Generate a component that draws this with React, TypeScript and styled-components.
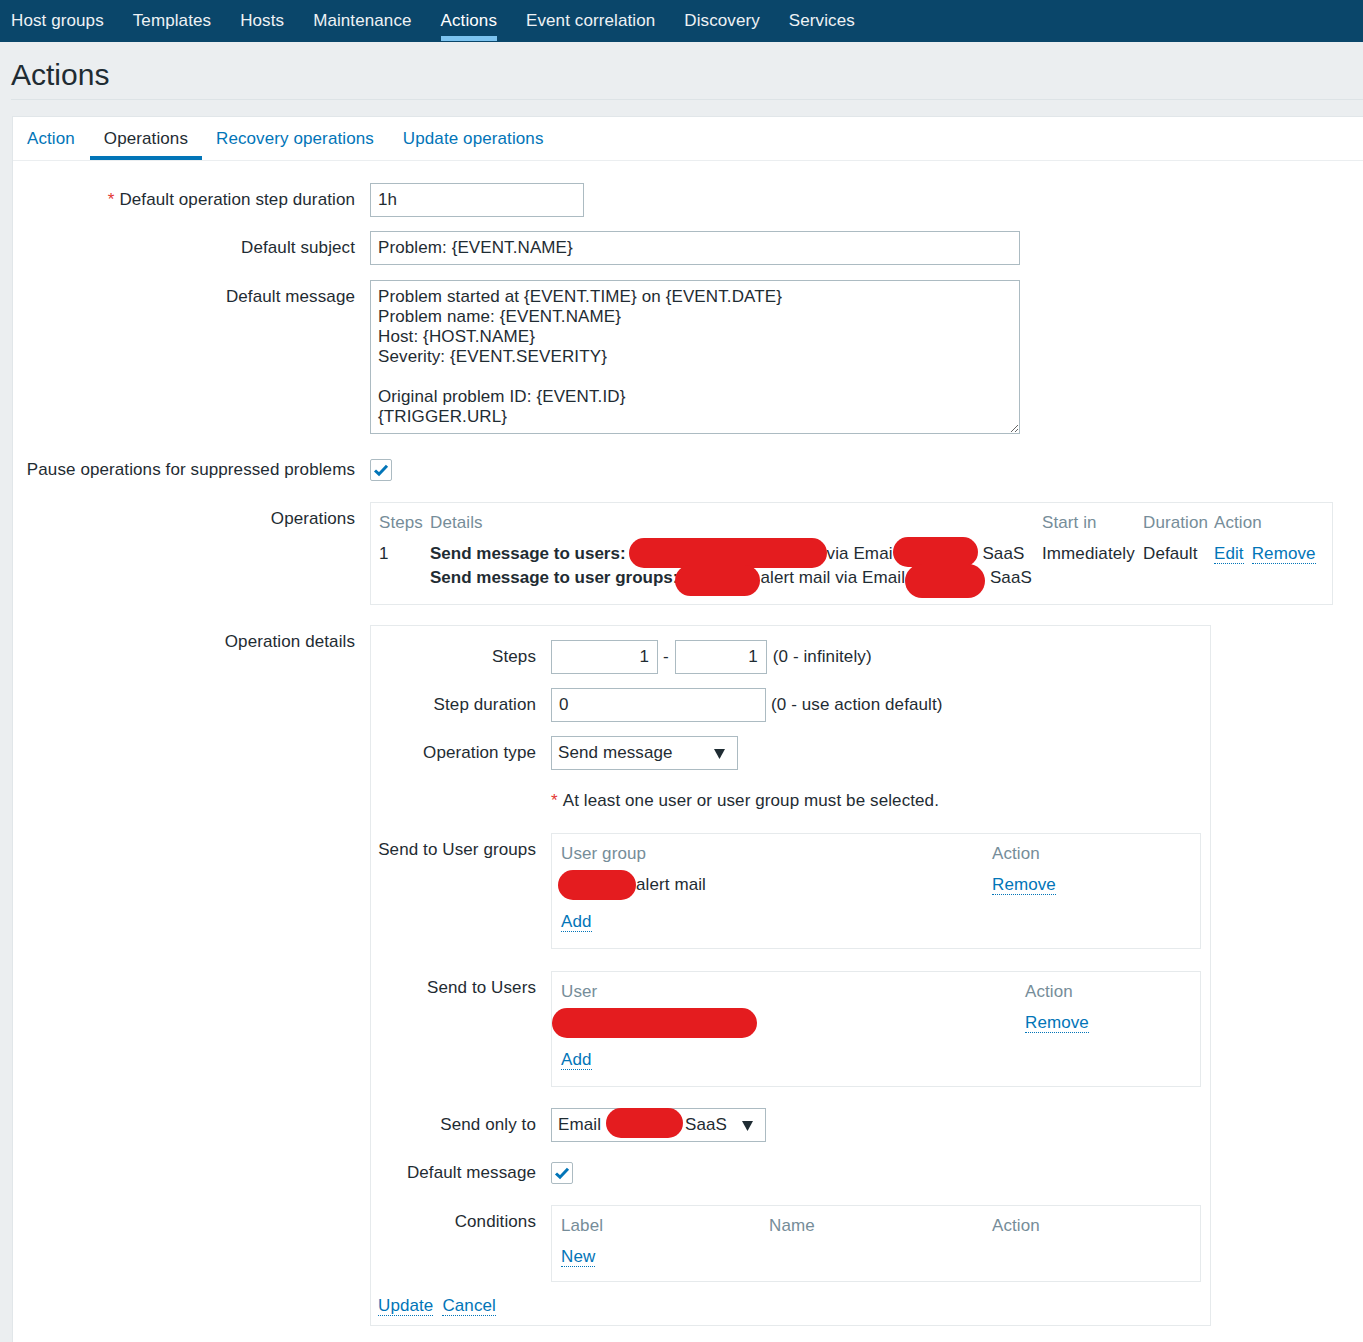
import React from 'react';
import styled, { createGlobalStyle } from 'styled-components';

const Global = createGlobalStyle`
  html, body { margin: 0; padding: 0; background: #ebeef0; }
  body {
    font-family: "Liberation Sans", Arial, sans-serif;
    font-size: 17px;
    letter-spacing: 0.1px;
    color: #1f2c33;
  }
  * { box-sizing: border-box; }
`;

const LINK = '#0275b8';
const MUTED = '#768d99';
const INPUT_BORDER = '#acbbc2';
const BOX_BORDER = '#e6eaec';

const TopNav = styled.nav`
  display: flex;
  height: 42px;
  background: #0a466a;
  padding-left: 11px;
  gap: 29px;
`;

const NavItem = styled.a<{ $active?: boolean }>`
  position: relative;
  display: flex;
  align-items: center;
  padding-bottom: 1px;
  color: ${(p) => (p.$active ? '#ffffff' : '#eef2f5')};
  text-decoration: none;
  white-space: nowrap;
  &::after {
    content: '';
    display: ${(p) => (p.$active ? 'block' : 'none')};
    position: absolute;
    left: 0;
    right: 0;
    bottom: 1px;
    height: 5px;
    background: #7cc3ef;
  }
`;

const Page = styled.div`
  padding-left: 11px;
`;

const Header = styled.h1`
  margin: 0;
  height: 58px;
  display: flex;
  align-items: center;
  font-size: 30px;
  font-weight: normal;
  letter-spacing: 0;
  border-bottom: 1px solid #dde3e6;
  padding-top: 8px;
`;

const Panel = styled.div`
  margin: 16px 0 0 1px;
  background: #fff;
  border: 1px solid #e1e6e9;
  border-right: none;
  border-bottom: none;
  min-height: 1226px;
`;

const TabBar = styled.div`
  display: flex;
  height: 44px;
  border-bottom: 1px solid #ebeef0;
`;

const Tab = styled.a<{ $active?: boolean }>`
  position: relative;
  display: flex;
  align-items: center;
  padding: 0 14px 0;
  margin-right: ${(p) => (p.$active ? '0' : '1px')};
  color: ${(p) => (p.$active ? '#1f2c33' : LINK)};
  white-space: nowrap;
  &::after {
    content: '';
    display: ${(p) => (p.$active ? 'block' : 'none')};
    position: absolute;
    left: 0;
    right: 0;
    bottom: 0;
    height: 4px;
    background: ${LINK};
  }
`;

const Form = styled.div`
  padding: 22px 0 0 0;
`;

const Row = styled.div<{ $top?: number; $labelW?: number }>`
  display: grid;
  grid-template-columns: ${(p) => p.$labelW ?? 342}px 1fr;
  column-gap: 15px;
  margin-top: ${(p) => p.$top ?? 0}px;
  align-items: start;
`;

const Label = styled.div`
  text-align: right;
  line-height: 34px;
  white-space: nowrap;
`;

const Req = styled.span`
  color: #e33734;
  margin-right: 5px;
`;

const FieldLine = styled.div`
  display: flex;
  align-items: center;
  min-height: 34px;
  white-space: nowrap;
`;

const TextInput = styled.input<{ $w: number; $right?: boolean }>`
  width: ${(p) => p.$w}px;
  height: 34px;
  border: 1px solid ${INPUT_BORDER};
  padding: 0 8px 0 7px;
  font: inherit;
  letter-spacing: inherit;
  color: #1f2c33;
  text-align: ${(p) => (p.$right ? 'right' : 'left')};
  background: #fff;
  outline: none;
`;

const TextArea = styled.textarea`
  width: 650px;
  height: 154px;
  border: 1px solid ${INPUT_BORDER};
  padding: 6px 7px;
  font: inherit;
  letter-spacing: 0.12px;
  line-height: 20px;
  color: #1f2c33;
  resize: vertical;
  display: block;
  outline: none;
`;

const Dash = styled.span`
  margin: 0 6px 0 5px;
`;

const Hint = styled.span<{ $gap?: number }>`
  margin-left: ${(p) => p.$gap ?? 5}px;
`;

const Select = styled.div<{ $w: number }>`
  width: ${(p) => p.$w}px;
  height: 34px;
  border: 1px solid ${INPUT_BORDER};
  display: flex;
  align-items: center;
  justify-content: space-between;
  padding: 0 12px 0 6px;
  background: #fff;
  white-space: nowrap;
  position: relative;
`;

const Check = styled.div`
  width: 22px;
  height: 22px;
  border: 1px solid ${INPUT_BORDER};
  border-radius: 2px;
  display: flex;
  align-items: center;
  justify-content: center;
  background: #fff;
`;

const Box = styled.div<{ $w: number }>`
  width: ${(p) => p.$w}px;
  border: 1px solid ${BOX_BORDER};
`;

const OpsBox = styled(Box)`
  padding: 8px 8px 14px;
`;

const OpsGrid = styled.div`
  display: grid;
  grid-template-columns: 51px 612px 101px 71px 1fr;
  line-height: 24px;
`;

const Head = styled.div<{ $gapBelow?: number }>`
  color: ${MUTED};
  white-space: nowrap;
  margin-bottom: ${(p) => p.$gapBelow ?? 0}px;
`;

const Cell = styled.div`
  white-space: nowrap;
`;

const Bold = styled.b`
  font-weight: bold;
  letter-spacing: 0;
`;

const Link = styled.a<{ $gap?: number }>`
  color: ${LINK};
  text-decoration: none;
  border-bottom: 1px dotted ${LINK};
  line-height: 18px;
  display: inline-block;
  margin-right: ${(p) => p.$gap ?? 0}px;
  cursor: pointer;
`;

const Redact = styled.span<{ $w: number; $h?: number; $ml?: number; $mr?: number; $dy?: number }>`
  display: inline-block;
  width: ${(p) => p.$w}px;
  height: ${(p) => p.$h ?? 30}px;
  border-radius: ${(p) => (p.$h ?? 30) / 2}px;
  background: #e41c1f;
  vertical-align: middle;
  margin: ${(p) => -(((p.$h ?? 30) - 14) / 2)}px ${(p) => p.$mr ?? 0}px
    ${(p) => -(((p.$h ?? 30) - 14) / 2)}px ${(p) => p.$ml ?? 0}px;
  position: relative;
  top: ${(p) => p.$dy ?? 0}px;
`;

const DetailsBox = styled(Box)`
  padding: 14px 9px 9px 0;
`;

const SubBox = styled(Box)<{ $cols: string; $bottom?: number }>`
  display: grid;
  grid-template-columns: ${(p) => p.$cols};
  padding: 8px 9px ${(p) => p.$bottom ?? 14}px;
  line-height: 24px;
`;

const SubRow = styled.div<{ $gap: number }>`
  display: contents;
  & > * { margin-bottom: ${(p) => p.$gap}px; }
`;

const Buttons = styled.div`
  display: flex;
  gap: 9px;
  padding-left: 7px;
  margin-top: 15px;
  line-height: 24px;
`;

const Arrow = () => (
  <svg width="11" height="11" viewBox="0 0 11 11">
    <polygon points="0,1 11,1 5.5,11" fill="#1f2c33" />
  </svg>
);

const CheckMark = () => (
  <svg width="16" height="14" viewBox="0 0 16 14">
    <path d="M2 7.5 L6 11.2 L14 2.8" fill="none" stroke={LINK} strokeWidth="3" strokeLinejoin="miter" />
  </svg>
);

const navItems = ['Host groups', 'Templates', 'Hosts', 'Maintenance', 'Actions', 'Event correlation', 'Discovery', 'Services'];
const tabs = ['Action', 'Operations', 'Recovery operations', 'Update operations'];

const message = `Problem started at {EVENT.TIME} on {EVENT.DATE}
Problem name: {EVENT.NAME}
Host: {HOST.NAME}
Severity: {EVENT.SEVERITY}

Original problem ID: {EVENT.ID}
{TRIGGER.URL}`;

export default function App() {
  return (
    <>
      <Global />
      <TopNav>
        {navItems.map((n) => (
          <NavItem key={n} $active={n === 'Actions'}>{n}</NavItem>
        ))}
      </TopNav>
      <Page>
        <Header>Actions</Header>
        <Panel>
          <TabBar>
            {tabs.map((t) => (
              <Tab key={t} $active={t === 'Operations'}>{t}</Tab>
            ))}
          </TabBar>
          <Form>
            <Row>
              <Label><Req>*</Req>Default operation step duration</Label>
              <FieldLine><TextInput $w={214} value="1h" readOnly /></FieldLine>
            </Row>
            <Row $top={14}>
              <Label>Default subject</Label>
              <FieldLine><TextInput $w={650} value="Problem: {EVENT.NAME}" readOnly /></FieldLine>
            </Row>
            <Row $top={15}>
              <Label>Default message</Label>
              <TextArea value={message} readOnly />
            </Row>
            <Row $top={19}>
              <Label>Pause operations for suppressed problems</Label>
              <FieldLine><Check><CheckMark /></Check></FieldLine>
            </Row>
            <Row $top={15}>
              <Label>Operations</Label>
              <OpsBox $w={963}>
                <OpsGrid>
                  <Head $gapBelow={7}>Steps</Head>
                  <Head $gapBelow={7}>Details</Head>
                  <Head $gapBelow={7}>Start in</Head>
                  <Head $gapBelow={7}>Duration</Head>
                  <Head $gapBelow={7}>Action</Head>
                  <Cell>1</Cell>
                  <Cell>
                    <div>
                      <Bold>Send message to users:</Bold>
                      <Redact $w={198} $ml={3} $dy={-2} />
                      via Emai
                      <Redact $w={85} $dy={-3} />
                      <span> SaaS</span>
                    </div>
                    <div>
                      <Bold>Send message to user groups:</Bold>
                      <Redact $w={85} $h={31} $ml={-3} $dy={2} />
                      alert mail via Email
                      <Redact $w={80} $h={34} $dy={2} />
                      <span> SaaS</span>
                    </div>
                  </Cell>
                  <Cell>Immediately</Cell>
                  <Cell>Default</Cell>
                  <Cell>
                    <Link $gap={8}>Edit</Link>
                    <Link>Remove</Link>
                  </Cell>
                </OpsGrid>
              </OpsBox>
            </Row>
            <Row $top={20}>
              <Label>Operation details</Label>
              <DetailsBox $w={841}>
                <Row $labelW={165}>
                  <Label>Steps</Label>
                  <FieldLine>
                    <TextInput $w={107} $right value="1" readOnly />
                    <Dash>-</Dash>
                    <TextInput $w={92} $right value="1" readOnly />
                    <Hint $gap={6}>(0 - infinitely)</Hint>
                  </FieldLine>
                </Row>
                <Row $labelW={165} $top={14}>
                  <Label>Step duration</Label>
                  <FieldLine>
                    <TextInput $w={215} value="0" readOnly />
                    <Hint $gap={5}>(0 - use action default)</Hint>
                  </FieldLine>
                </Row>
                <Row $labelW={165} $top={14}>
                  <Label>Operation type</Label>
                  <FieldLine>
                    <Select $w={187}>
                      <span>Send message</span>
                      <Arrow />
                    </Select>
                  </FieldLine>
                </Row>
                <Row $labelW={165} $top={14}>
                  <Label />
                  <FieldLine><Req>*</Req>At least one user or user group must be selected.</FieldLine>
                </Row>
                <Row $labelW={165} $top={15}>
                  <Label>Send to User groups</Label>
                  <SubBox $w={650} $cols="431px 1fr">
                    <SubRow $gap={7}>
                      <Head>User group</Head>
                      <Head>Action</Head>
                    </SubRow>
                    <SubRow $gap={13}>
                      <Cell><Redact $w={78} $ml={-3} $dy={-1} />alert mail</Cell>
                      <Cell><Link>Remove</Link></Cell>
                    </SubRow>
                    <SubRow $gap={0}>
                      <Cell><Link>Add</Link></Cell>
                      <Cell />
                    </SubRow>
                  </SubBox>
                </Row>
                <Row $labelW={165} $top={22}>
                  <Label>Send to Users</Label>
                  <SubBox $w={650} $cols="464px 1fr">
                    <SubRow $gap={7}>
                      <Head>User</Head>
                      <Head>Action</Head>
                    </SubRow>
                    <SubRow $gap={13}>
                      <Cell><Redact $w={205} $ml={-9} $dy={-1} /></Cell>
                      <Cell><Link>Remove</Link></Cell>
                    </SubRow>
                    <SubRow $gap={0}>
                      <Cell><Link>Add</Link></Cell>
                      <Cell />
                    </SubRow>
                  </SubBox>
                </Row>
                <Row $labelW={165} $top={21}>
                  <Label>Send only to</Label>
                  <FieldLine>
                    <Select $w={215}>
                      <span>
                        Email
                        <Redact $w={77} $ml={5} $mr={2} $dy={-3} />
                        SaaS
                      </span>
                      <Arrow />
                    </Select>
                  </FieldLine>
                </Row>
                <Row $labelW={165} $top={14}>
                  <Label>Default message</Label>
                  <FieldLine><Check><CheckMark /></Check></FieldLine>
                </Row>
                <Row $labelW={165} $top={15}>
                  <Label>Conditions</Label>
                  <SubBox $w={650} $cols="208px 223px 1fr" $bottom={12}>
                    <SubRow $gap={7}>
                      <Head>Label</Head>
                      <Head>Name</Head>
                      <Head>Action</Head>
                    </SubRow>
                    <SubRow $gap={0}>
                      <Cell><Link>New</Link></Cell>
                      <Cell />
                      <Cell />
                    </SubRow>
                  </SubBox>
                </Row>
                <Buttons>
                  <Link>Update</Link>
                  <Link>Cancel</Link>
                </Buttons>
              </DetailsBox>
            </Row>
          </Form>
        </Panel>
      </Page>
    </>
  );
}
